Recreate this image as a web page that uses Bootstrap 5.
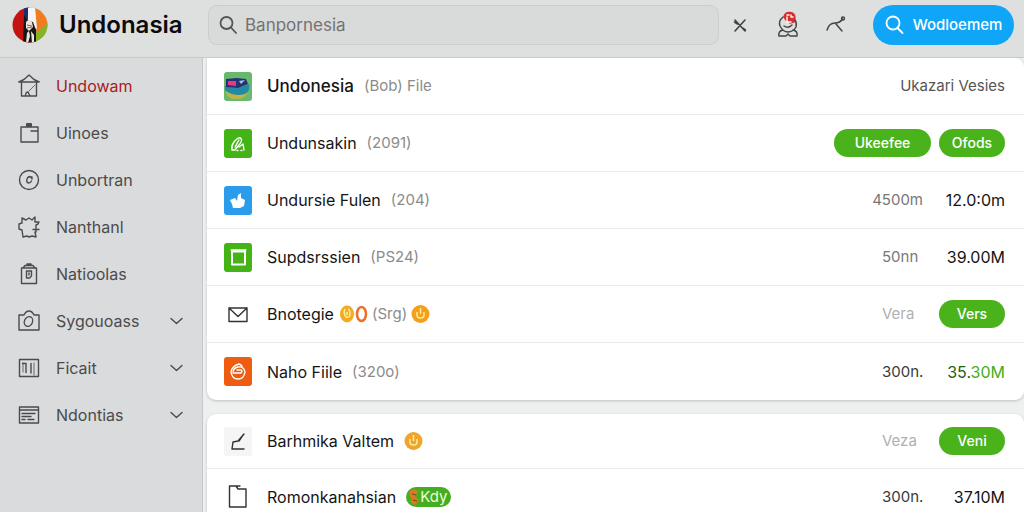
<!DOCTYPE html>
<html lang="id">
<head>
<meta charset="utf-8">
<meta name="viewport" content="width=device-width, initial-scale=1">
<title>Undonasia</title>
<link href="https://cdn.jsdelivr.net/npm/bootstrap@5.3.0/dist/css/bootstrap.min.css" rel="stylesheet">
<style>
  body { font-family: Inter, "Liberation Sans", sans-serif; font-size: 16px; line-height: 24px; background: #eeefef; color: #151515; }
  svg { display: block; flex: none; }
  .line-icon { fill: none; stroke: currentColor; stroke-width: 1.4; stroke-linejoin: round; stroke-linecap: round; }
  .topbar { background: #dedfdf; border-bottom: 1px solid #c9c9c9; padding: 5px 10px 12px 12px; }
  .brand { width: 196px; gap: 11px; color: #0b0b0b; font-size: 24px; font-weight: 600; }
  .search-box { height: 40px; border: 1px solid #cdcdcd; border-radius: 9px; background: #d9dada; padding: 0 10px; gap: 7px; color: #555; }
  .search-box input { background: none; border: 0; outline: 0; color: #6b6b6b; font-size: 17px; padding: 0; }
  .search-box input::placeholder { color: #737373; opacity: 1; }
  .tools { gap: 24px; padding: 0 25px 0 9px; }
  .tool-btn { border: 0; background: none; padding: 0; color: #444; }
  .find-btn { width: 141px; height: 40px; background: #0fa6f8; color: #fff; font-size: 15px; gap: 9px; border: 0; font-weight: 500; }
  .side { width: 203px; background: #dadbdc; border-right: 1px solid #c6c7c8; padding-top: 4px; }
  .side-link { height: 47px; padding: 0 19px 0 18px; gap: 16px; color: #4b4b4b; font-size: 16px; text-decoration: none; }
  .side-link.active { color: #a8201f; }
  .side-link.active svg { color: #4b4b4b; }
  .content { padding-left: 4px; }
  .panel { background: #fff; border-radius: 9px; box-shadow: 0 1px 3px #0003; margin-bottom: 14px; }
  .panel.first { border-top-left-radius: 0; }
  .entry { min-height: 57px; padding: 0 19px 0 17px; gap: 15px; border-bottom: 1px solid #e9e9e9; }
  .compact .entry { min-height: 55px; }
  .entry:last-child { border-bottom: 0; }
  .tile { width: 28px; height: 29px; border-radius: 3px; color: #fff; flex: none; }
  .tile-green { background: #43b315; }
  .tile-blue { background: #2b9cec; }
  .tile-orange { background: #ee5c12; }
  .tile-plain { color: #333; }
  .tile-soft { background: #f5f5f5; color: #333; }
  .name { gap: 10px; font-size: 16px; }
  .lead-name { font-size: 17px; font-weight: 500; }
  .count { color: #8b8b8b; font-size: 15px; }
  .with-coins { gap: 6px; }
  .note { color: #555; font-size: 15px; }
  .amount { width: 41px; font-size: 15px; color: #777; white-space: nowrap; }
  .amount-dark { color: #3a3a3a; }
  .total { width: 66px; font-size: 16px; }
  .gain-dark { color: #23620f; }
  .gain { color: #46ad22; }
  .pill { height: 28px; width: 66px; border: 0; border-radius: 14px; background: #4ab31b; color: #fff; font-size: 14px; font-weight: 500; padding: 0; line-height: 28px; }
  .pill-wide { width: 97px; }
  .pair { gap: 16px; }
  .faint { color: #b0b0b0; }
  .tag { height: 20px; background: #46ad22; color: #e5ffd2; border-radius: 10px; font-size: 15px; line-height: 20px; padding: 0 4px 0 2px; }
</style>
</head>
<body class="vh-100 overflow-hidden d-flex flex-column">
<header class="topbar d-flex align-items-center">
  <a class="brand d-flex align-items-center text-decoration-none" href="#">
    <svg width="36" height="36" viewBox="0 0 36 36" aria-hidden="true">
      <defs><clipPath id="disc"><circle cx="18" cy="18" r="17.5"/></clipPath></defs>
      <g clip-path="url(#disc)">
        <path d="M0 0h18v36H0z" fill="#c41412"/>
        <path d="M18 0h18v36H18z" fill="#f07c22"/>
        <path d="M36 16 24 26v10h12z" fill="#82b52c"/>
        <path d="M12 0h5l-2 14-3 6z" fill="#1d2f6d"/>
        <path d="M16 0h7l2 22-9-4z" fill="#f5f5f5"/>
        <path d="M12 8l3 5 6 2 3 8v13H11z" fill="#171718"/>
        <path d="M14 15q3-4 6 0l1 5-4 4-3-3zM15 26l2-2 1 5-2 7h-2zM19 24l3 4v8h-2z" fill="#eee5df"/>
        <path d="M15 18l5 1M15 21l5-1" stroke="#7b625c" fill="none"/>
      </g>
    </svg>
    <span>Undonasia</span>
  </a>
  <label class="search-box d-flex align-items-center flex-grow-1">
    <svg class="line-icon" width="19" height="20" viewBox="0 0 19 20"><g stroke-width="1.800"><circle cx="7.500" cy="8" r="6"/><path d="M12 12.500l5 5.500"/></g></svg>
    <input class="w-100" type="text" placeholder="Banpornesia" aria-label="Search">
  </label>
  <div class="tools d-flex align-items-center">
    <button class="tool-btn" aria-label="Close"><svg class="line-icon" width="24" height="24" viewBox="0 0 24 24"><path d="M7 7l10 11M17 7 7 18M6.500 9l3 2M17.500 17l-3-2" stroke-width="1.600"/></svg></button>
    <button class="tool-btn" aria-label="Account"><svg class="line-icon" width="24" height="28" viewBox="0 0 24 28"><path d="M8 6Q9 1 14 1.500q5 .5 5 5.500l-1 4-4 1-4-3z" fill="#d8302e" stroke="#d8302e"/><path d="M7 6q-5 4-3 9 3 6 8 6t8-5q1-4-1-7M7 19Q2 20 3 25h7l2-2 2 2h7q1-5-4-6M8 15q4 3 8-1"/><path d="M11 6v5h4M11 4h2M15 4v2h2" stroke="#fff"/></svg></button>
    <button class="tool-btn" aria-label="Share"><svg class="line-icon" width="24" height="24" viewBox="0 0 24 24"><path d="M3 17q2-7 8-7 5 0 7.500-4M12 11l6 7" stroke-width="1.500"/><circle cx="19" cy="5.500" r="1.500"/></svg></button>
  </div>
  <button class="find-btn rounded-pill d-flex align-items-center justify-content-center"><svg class="line-icon" width="19" height="20" viewBox="0 0 19 20"><g stroke-width="1.800"><circle cx="8" cy="8" r="6.500"/><path d="M12.500 13l5 5"/></g></svg><span>Wodloemem</span></button>
</header>
<div class="d-flex flex-grow-1 overflow-hidden">
  <nav class="side flex-shrink-0">
    <a class="side-link active d-flex align-items-center" href="#"><svg class="line-icon" width="22" height="24" viewBox="0 0 22 24"><path d="M3.500 8.500V22h15V8.500M.8 8 6 5.500 11 1l5 4.500L21.200 8zM7.500 22q0-4 2.500-4l2 4"/><path d="M11 17l6-6" stroke-width=".8"/></svg><span>Undowam</span></a>
    <a class="side-link d-flex align-items-center" href="#"><svg class="line-icon" width="22" height="24" viewBox="0 0 22 24"><path d="M3 6h17v15H3zM13 10h6"/><path d="M9 5V3h4v2z" stroke-width="2"/></svg><span>Uinoes</span></a>
    <a class="side-link d-flex align-items-center" href="#"><svg class="line-icon" width="22" height="24" viewBox="0 0 22 24"><circle cx="11" cy="12" r="9.500"/><path d="M13.500 10q-2-3-4 0-2 4 1 5 2 0 3-2M11 9h3v2"/></svg><span>Unbortran</span></a>
    <a class="side-link d-flex align-items-center" href="#"><svg class="line-icon" width="22" height="24" viewBox="0 0 22 24"><path d="M4 3l4 2 3-2 3 2 3-3v5h4l-1 2-2 1v7h-1l1 5-4-1-3 1-2-1-4 1-1-7-3-1V9l3-1z"/><path d="M15 14.500h6"/></svg><span>Nanthanl</span></a>
    <a class="side-link d-flex align-items-center" href="#"><svg class="line-icon" width="22" height="24" viewBox="0 0 22 24"><path d="M3.500 6h15v15.500h-15zM5 6l2-2.500h8L17 6M9 3V2h4v1M8.500 9h5v5l-2 2h-3zM11 11v2"/></svg><span>Natioolas</span></a>
    <a class="side-link d-flex align-items-center" href="#"><svg class="line-icon" width="22" height="24" viewBox="0 0 22 24"><path d="M1 6h5q2-4 5-4t5 4h5v15H1z"/><ellipse cx="10.500" cy="12.500" rx="4" ry="5" transform="rotate(25 10.500 12.500)"/></svg><span class="flex-grow-1">Sygouoass</span><svg class="line-icon" width="13" height="8" viewBox="0 0 13 8"><path d="M1 1.500l5.500 5 5.500-5"/></svg></a>
    <a class="side-link d-flex align-items-center" href="#"><svg class="line-icon" width="22" height="24" viewBox="0 0 22 24"><path d="M1.500 3.500h19v17h-19zM4.500 7.500H8v9M13 7.500v9.500"/><path d="M5 7v9M16 7v12" stroke-width=".8"/></svg><span class="flex-grow-1">Ficait</span><svg class="line-icon" width="13" height="8" viewBox="0 0 13 8"><path d="M1 1.500l5.500 5 5.500-5"/></svg></a>
    <a class="side-link d-flex align-items-center" href="#"><svg class="line-icon" width="22" height="24" viewBox="0 0 22 24"><path d="M1.500 4h19v16h-19zM2 7h18M4 10.500h13M4 13.500h9M4 16.500h3m3 0h6"/></svg><span class="flex-grow-1">Ndontias</span><svg class="line-icon" width="13" height="8" viewBox="0 0 13 8"><path d="M1 1.500l5.500 5 5.500-5"/></svg></a>
  </nav>
  <main class="content flex-grow-1">
    <ul class="panel first list-unstyled">
      <li class="entry d-flex align-items-center">
        <svg class="tile" viewBox="0 0 28 29"><path d="M0 0h28v29H0z" fill="#68b96d"/><path d="M2 20q10-4 22 0-3 8-14 7-7-1-8-7z" fill="#bdb544"/><path d="M1 14q12 4 24-2 2 10-9 11-10 0-15-5z" fill="#2489a6"/><path d="M2 7l11-1 9 1 2 5-10 4L2 15z" fill="#263272"/><path d="M4 9h8v5l-8-1z" fill="#e23c86"/><path d="M15 9l6-1-4 4z" fill="#9dc8ee"/></svg>
        <div class="name d-flex align-items-center flex-grow-1"><span class="lead-name">Undonesia</span><span class="count">(Bob) File</span></div>
        <span class="note">Ukazari Vesies</span>
      </li>
      <li class="entry d-flex align-items-center">
        <span class="tile tile-green"><svg class="line-icon" width="28" height="29" viewBox="0 0 28 29"><path d="M8 21q-1-4 2-8 5-6 7-3.500t-3 7.500l-3 4zM11 18l4-7M15 18l4-3 1 6M13 21.500h1m3 0h1"/></svg></span>
        <div class="name d-flex align-items-center flex-grow-1"><span>Undunsakin</span><span class="count">(2091)</span></div>
        <div class="d-flex gap-2"><button class="pill pill-wide">Ukeefee</button><button class="pill">Ofods</button></div>
      </li>
      <li class="entry d-flex align-items-center">
        <span class="tile tile-blue"><svg width="28" height="29" viewBox="0 0 28 29"><path d="M6 14l5-2 2 3 1-6 3-2v5l4 2-1 6-4 2H9l-1-4z" fill="#fff"/></svg></span>
        <div class="name d-flex align-items-center flex-grow-1"><span>Undursie Fulen</span><span class="count">(204)</span></div>
        <div class="pair d-flex"><span class="amount d-flex justify-content-end">4500m</span><span class="total text-end">12.0:0m</span></div>
      </li>
      <li class="entry d-flex align-items-center">
        <span class="tile tile-green"><svg class="line-icon" width="28" height="29" viewBox="0 0 28 29"><path d="M8 8.500h13v13H8z" stroke-width="2"/><path d="M7 7h15"/></svg></span>
        <div class="name d-flex align-items-center flex-grow-1"><span>Supdsrssien</span><span class="count">(PS24)</span></div>
        <div class="pair d-flex"><span class="amount">50nn</span><span class="total text-end">39.00M</span></div>
      </li>
      <li class="entry d-flex align-items-center">
        <span class="tile tile-plain"><svg class="line-icon" width="28" height="29" viewBox="0 0 28 29"><path d="M5 8h18v13.500H5zM5 8l9 8.500L23 8"/></svg></span>
        <div class="name with-coins d-flex align-items-center flex-grow-1"><span>Bnotegie</span>
          <span class="d-flex align-items-center gap-1"><svg width="28" height="20" viewBox="0 0 28 20"><ellipse cx="7" cy="10" rx="7" ry="8.500" fill="#f6a921"/><path d="M5 5q-2 4 1 8 4 1 4-3T8 5M7 8v3" fill="none" stroke="#fff0a0" stroke-width="1.500"/><ellipse cx="21.500" cy="10" rx="4.500" ry="7" fill="#fff" stroke="#ea7126" stroke-width="2.500"/></svg><span class="count">(Srg)</span><svg width="19" height="20" viewBox="0 0 19 20"><circle cx="9.500" cy="10" r="9" fill="#f3a01e"/><path d="M6 8v3q0 3 3.500 3t3.500-3V8M9.500 4v6" fill="none" stroke="#ffeb98" stroke-width="1.500"/></svg></span></div>
        <div class="pair d-flex align-items-center"><span class="amount faint">Vera</span><button class="pill">Vers</button></div>
      </li>
      <li class="entry d-flex align-items-center">
        <span class="tile tile-orange"><svg class="line-icon" width="28" height="29" viewBox="0 0 28 29"><path d="M15 7q-7 2-8 8 1 7 7 7t7-7q-1-6-7-5-5 1-5 6h8q2-2 0-3h-4M15 7q3 1 3 3"/></svg></span>
        <div class="name d-flex align-items-center flex-grow-1"><span>Naho Fiile</span><span class="count">(320o)</span></div>
        <div class="pair d-flex"><span class="amount amount-dark">300n.</span><span class="total text-end"><span class="gain-dark">35.</span><span class="gain">30M</span></span></div>
      </li>
    </ul>
    <ul class="panel compact list-unstyled">
      <li class="entry d-flex align-items-center">
        <span class="tile tile-soft"><svg class="line-icon" width="28" height="29" viewBox="0 0 28 29"><path d="M20 7l-6 7-5 1-1 7h12M15 14l4-6"/></svg></span>
        <div class="name d-flex align-items-center flex-grow-1"><span>Barhmika Valtem</span><svg width="19" height="20" viewBox="0 0 19 20"><circle cx="9.500" cy="10" r="9" fill="#efa42c"/><path d="M6 8v3q0 3 3.500 3t3.500-3V8M9.500 4v6" fill="none" stroke="#ffeb98" stroke-width="1.500"/></svg></div>
        <div class="pair d-flex align-items-center"><span class="amount faint">Veza</span><button class="pill">Veni</button></div>
      </li>
      <li class="entry d-flex align-items-center">
        <span class="tile tile-plain"><svg class="line-icon" width="28" height="29" viewBox="0 0 28 29"><path d="M5.500 4H12l2 3h8v18H5.500zM12 4h4"/></svg></span>
        <div class="name d-flex align-items-center flex-grow-1"><span>Romonkanahsian</span><span class="tag d-flex align-items-center"><svg width="12" height="18" viewBox="0 0 12 18"><path d="M2 3q5-4 8 1l-3 4 4 4-4 5-5-3 2-3-3-4z" fill="#dc7924"/><path d="M4 6l4 1M5 12l4 1" stroke="#66501c"/></svg>Kdy</span></div>
        <div class="pair d-flex"><span class="amount amount-dark">300n.</span><span class="total text-end">37.10M</span></div>
      </li>
    </ul>
  </main>
</div>
<script src="https://cdn.jsdelivr.net/npm/bootstrap@5.3.0/dist/js/bootstrap.bundle.min.js"></script>
</body>
</html>
